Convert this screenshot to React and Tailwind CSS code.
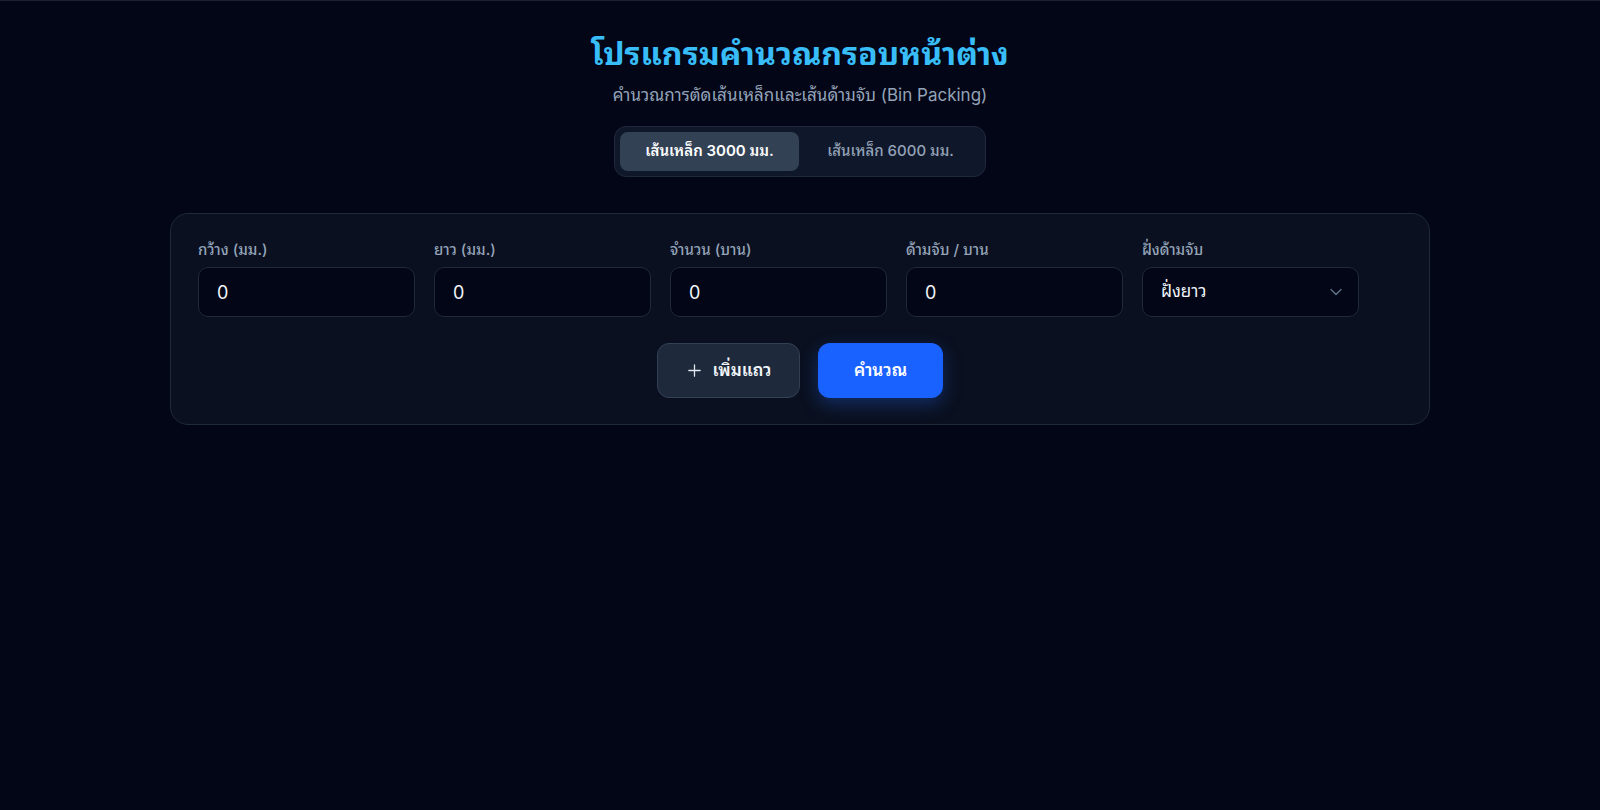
import React, { useState } from "react";

const font = { fontFamily: 'Inter, "Noto Sans Thai Looped", "Noto Sans Thai", "Noto Sans", sans-serif' };

function Field({ label, value }) {
  return (
    <div className="flex flex-col gap-[7px]">
      <label className="text-[15px] font-medium text-[#94a3b8] leading-[20px]">{label}</label>
      <div className="h-[50px] rounded-[10px] border border-[#1e293b] bg-[#020617] flex items-center pl-[18px] text-[18px] text-[#f1f5f9]">
        {value}
      </div>
    </div>
  );
}

export default function App() {
  const [tab, setTab] = useState(0);
  return (
    <div style={font} className="min-h-[810px] w-full bg-[#020617] border-t border-[#1a2030] flex flex-col items-center">
      <h1 className="mt-[32px] text-[32px] leading-[42px] font-bold text-[#38bdf8]">โปรแกรมคำนวณกรอบหน้าต่าง</h1>
      <p className="mt-[9px] text-[17px] leading-[22px] text-[#94a3b8]">คำนวณการตัดเส้นเหล็กและเส้นด้ามจับ (Bin Packing)</p>
      <div className="mt-[20px] flex items-center rounded-[12px] border border-[#1e293b] bg-[#0f172a] p-[5px] gap-[2px]">
        <button
          onClick={() => setTab(0)}
          className={`h-[39px] w-[179px] rounded-[8px] text-[15px] font-semibold ${tab === 0 ? "bg-[#334155] text-white" : "text-[#94a3b8]"}`}
        >
          เส้นเหล็ก 3000 มม.
        </button>
        <button
          onClick={() => setTab(1)}
          className={`h-[39px] w-[179px] rounded-[8px] text-[15px] font-medium ${tab === 1 ? "bg-[#334155] text-white" : "text-[#94a3b8]"}`}
        >
          เส้นเหล็ก 6000 มม.
        </button>
      </div>

      <div className="mt-[36px] w-[1260px] rounded-[18px] border border-[#1e293b] bg-[#0a101f] px-[27px] pt-[26px] pb-[26px]">
        <div className="grid grid-cols-[repeat(5,217px)] gap-x-[19px]">
          <Field label="กว้าง (มม.)" value="0" />
          <Field label="ยาว (มม.)" value="0" />
          <Field label="จำนวน (บาน)" value="0" />
          <Field label="ด้ามจับ / บาน" value="0" />
          <div className="flex flex-col gap-[7px]">
            <label className="text-[15px] font-medium text-[#94a3b8] leading-[20px]">ฝั่งด้ามจับ</label>
            <div className="h-[50px] rounded-[10px] border border-[#1e293b] bg-[#020617] flex items-center justify-between pl-[18px] pr-[12px] text-[17px] text-[#f1f5f9]">
              <span>ฝั่งยาว</span>
              <svg width="20" height="20" viewBox="0 0 24 24" fill="none" stroke="#64748b" strokeWidth="1.6" strokeLinecap="round" strokeLinejoin="round">
                <path d="M6 9l6 6 6-6" />
              </svg>
            </div>
          </div>
        </div>
        <div className="mt-[26px] flex justify-center gap-[18px]">
          <button className="h-[55px] w-[143px] rounded-[12px] border border-[#334155] bg-[#1e293b] flex items-center justify-center gap-[10px] text-[17px] font-semibold text-[#f1f5f9]">
            <svg width="17" height="17" viewBox="0 0 24 24" fill="none" stroke="#e2e8f0" strokeWidth="1.8" strokeLinecap="round">
              <path d="M12 4v16M4 12h16" />
            </svg>
            เพิ่มแถว
          </button>
          <button className="h-[55px] w-[125px] rounded-[12px] bg-[#1a62ff] text-[17px] font-semibold text-white shadow-[0_6px_18px_rgba(37,99,235,0.35)]">
            คำนวณ
          </button>
        </div>
      </div>
    </div>
  );
}
